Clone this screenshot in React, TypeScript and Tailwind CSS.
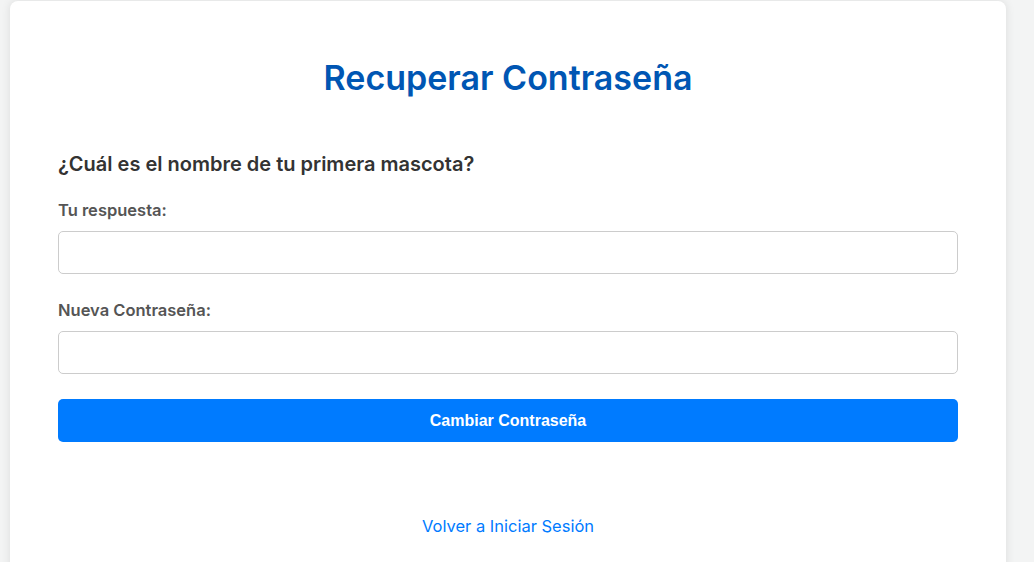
export default function App() {
  return (
    <div className="h-[562px] overflow-hidden bg-[#f3f4f4] pl-[10px] pr-[28px] pt-[1px] font-['Inter','Noto_Sans',sans-serif]">
      <div className="flex h-[600px] flex-col rounded-[8px] bg-white px-[48px] pt-[53px] shadow-[0_0_10px_rgba(0,0,0,0.1)]">
        <h1 className="text-center text-[34px] font-semibold leading-[48px] text-[#0056b3]">
          Recuperar Contraseña
        </h1>

        <form className="mt-[49px] flex flex-col" onSubmit={(e) => e.preventDefault()}>
          <p className="text-[20px] font-semibold leading-[27px] text-[#333]">
            ¿Cuál es el nombre de tu primera mascota?
          </p>

          <label className="mt-[21px] text-[16.5px] font-semibold leading-[22px] text-[#555]">
            Tu respuesta:
          </label>
          <input
            type="text"
            className="mt-[10px] h-[43px] w-full rounded-[5px] border border-[#ccc] px-3 outline-none"
          />

          <label className="mt-[25px] text-[16.5px] font-semibold leading-[22px] text-[#555]">
            Nueva Contraseña:
          </label>
          <input
            type="password"
            className="mt-[10px] h-[43px] w-full rounded-[5px] border border-[#ccc] px-3 outline-none"
          />

          <button
            type="submit"
            className="mt-[25px] h-[43px] w-full rounded-[5px] bg-[#007bff] font-['Liberation_Sans',Arial,sans-serif] text-[16px] font-bold text-white"
          >
            Cambiar Contraseña
          </button>
        </form>

        <a href="#" className="mt-[72px] text-center text-[16.5px] leading-[24px] text-[#007bff]">
          Volver a Iniciar Sesión
        </a>
      </div>
    </div>
  );
}
